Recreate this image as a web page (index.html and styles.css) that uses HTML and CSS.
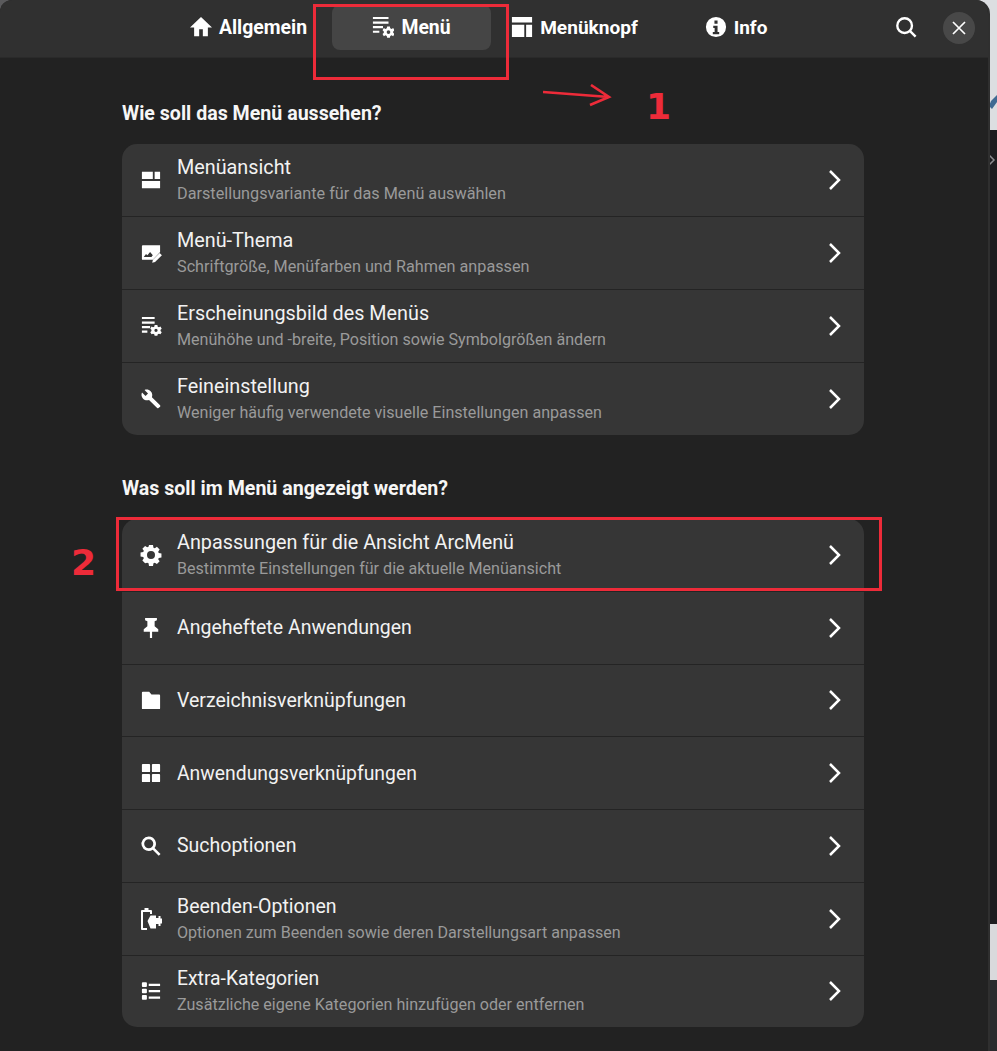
FILE: index.html
```html
<!DOCTYPE html>
<html lang="de">
<head>
<meta charset="utf-8">
<title>ArcMenü Einstellungen</title>
<link rel="stylesheet" href="styles.css">
</head>
<body>
<div class="screen">
  <main class="window">
    <header class="topbar">
      <nav class="tabs">
        <a class="tab tab-allgemein"><svg class="tab-icon" viewBox="0 0 24 24"><path d="M10 22v-7.500h4V22h5.500v-9.500H24L12 1 0 12.500h4.500V22z"/></svg>Allgemein</a>
        <a class="tab tab-menu active"><svg class="tab-icon" viewBox="0 0 24 24"><path d="M1 1h17v2.400H1zM1 6h17v2.400H1zM1 11h11v2.400H1zM1 16h7v2.400H1z"/><path fill-rule="evenodd" d="M16.500 11.500h3l.4 1.900 1.500.7 1.700-.9 1.400 2.400-1.400 1.300v1.400l1.400 1.300-1.400 2.400-1.700-.9-1.500.7-.4 1.900h-3l-.4-1.900-1.500-.7-1.700.9-1.400-2.400 1.400-1.300v-1.400l-1.400-1.300 1.400-2.400 1.700.9 1.500-.7zM18 15.500a2 2 0 1 0 0 4 2 2 0 0 0 0-4z"/></svg>Menü</a>
        <a class="tab tab-knopf"><svg class="tab-icon" viewBox="0 0 24 24"><path d="M1 1h22v6H1zM1 9.500h13.500V23H1zM16.500 9.500H23V23h-6.500z"/></svg>Menüknopf</a>
        <a class="tab tab-info"><svg class="tab-icon" viewBox="0 0 24 24"><path fill-rule="evenodd" d="M12 1a11 11 0 1 0 0 22 11 11 0 0 0 0-22zM10.300 5h3.400v3.400h-3.400zM9 10.500h4.700v7H15.500V20H8.500v-2.500h2v-4.500H9z"/></svg>Info</a>
      </nav>
      <button class="search-btn"><svg viewBox="0 0 24 24"><circle cx="10.500" cy="10.500" r="8"/><path d="M16.200 16.200L22.500 22.500"/></svg></button>
      <button class="close-btn"><svg viewBox="3 3 10 10"><path d="M3 3l10 10M13 3L3 13"/></svg></button>
    </header>
    <div class="content">
      <h2 class="group-title first">Wie soll das Menü aussehen?</h2>
      <section class="card">
        <a class="row"><svg class="row-icon" viewBox="0 0 22 22"><path d="M1 2h12v8H1zM15 2h6v8h-6zM1 12h20v8H1z"/></svg><span class="text"><span class="title">Menüansicht</span><span class="sub wide-sub">Darstellungsvariante für das Menü auswählen</span></span><svg class="chev" viewBox="0 0 14 22"><path d="M2 2l9 9-9 9"/></svg></a>
        <a class="row"><svg class="row-icon" viewBox="0 0 22 22"><path fill-rule="evenodd" d="M2 2.500h19V10l-8 8.500H2a1 1 0 0 1-1-1V3.500a1 1 0 0 1 1-1zM3 15.500h8.500l1.500-2-3-3.500L7 13.500l-1.500-1.300z"/><path d="M20.500 11l2.500 2.500-7.500 7.500-3.200.8.800-3.300z"/></svg><span class="text"><span class="title">Menü-Thema</span><span class="sub wide-sub">Schriftgröße, Menüfarben und Rahmen anpassen</span></span><svg class="chev" viewBox="0 0 14 22"><path d="M2 2l9 9-9 9"/></svg></a>
        <a class="row"><svg class="row-icon" viewBox="0 0 22 22"><path d="M1 1h14v2.400H1zM1 6h14v2.400H1zM1 11h9v2.400H1zM1 16h6v2.400H1z"/><path fill-rule="evenodd" d="M15 10h3l.4 1.700 1.400.7 1.600-.8 1.400 2.400-1.300 1.200v1.400l1.300 1.200-1.400 2.400-1.600-.8-1.400.7-.4 1.700h-3l-.4-1.700-1.400-.7-1.600.8-1.400-2.400 1.300-1.200v-1.400l-1.300-1.200 1.400-2.400 1.600.8 1.400-.7zM16.500 14a1.800 1.800 0 1 0 0 3.600 1.800 1.800 0 0 0 0-3.600z"/></svg><span class="text"><span class="title">Erscheinungsbild des Menüs</span><span class="sub">Menühöhe und -breite, Position sowie Symbolgrößen ändern</span></span><svg class="chev" viewBox="0 0 14 22"><path d="M2 2l9 9-9 9"/></svg></a>
        <a class="row"><svg class="row-icon" viewBox="0 0 22 22"><path d="M21 18L12 9c.8-2.200.4-4.800-1.400-6.600C8.800.6 6 .2 3.900 1.200L7.700 5 5 7.700 1.100 3.900C0 6 .5 8.800 2.300 10.600c1.800 1.800 4.300 2.200 6.500 1.400l9 9c.4.400 1 .4 1.400 0l1.800-1.600c.4-.4.4-1 0-1.400z"/></svg><span class="text"><span class="title">Feineinstellung</span><span class="sub">Weniger häufig verwendete visuelle Einstellungen anpassen</span></span><svg class="chev" viewBox="0 0 14 22"><path d="M2 2l9 9-9 9"/></svg></a>
      </section>
      <h2 class="group-title second">Was soll im Menü angezeigt werden?</h2>
      <section class="card">
        <a class="row"><svg class="row-icon" viewBox="0 0 22 22"><path fill-rule="evenodd" d="M8.800 0h4.400l.5 3 1.500.6L17.500 2l3 3-1.600 2.300.6 1.500 3 .5v4.400l-3 .5-.6 1.500 1.600 2.300-3 3-2.300-1.600-1.500.6-.5 3H8.800l-.5-3-1.500-.6L4.500 20l-3-3 1.600-2.300-.6-1.500-3-.5V8.300l3-.5.6-1.500L1.500 4l3-3 2.300 1.600 1.500-.6zM11 6.600a4.400 4.400 0 1 0 0 8.800 4.400 4.400 0 0 0 0-8.800z"/></svg><span class="text"><span class="title">Anpassungen für die Ansicht ArcMenü</span><span class="sub">Bestimmte Einstellungen für die aktuelle Menüansicht</span></span><svg class="chev" viewBox="0 0 14 22"><path d="M2 2l9 9-9 9"/></svg></a>
        <a class="row"><svg class="row-icon" viewBox="0 0 22 22"><path d="M4.500 0h13v2.500l-2.500 1V9l4 3.500V15H12.200v7H9.800v-7H3v-2.500L7 9V3.500l-2.500-1z"/></svg><span class="text"><span class="title snug">Angeheftete Anwendungen</span></span><svg class="chev" viewBox="0 0 14 22"><path d="M2 2l9 9-9 9"/></svg></a>
        <a class="row"><svg class="row-icon" viewBox="0 0 22 22"><path d="M2 2h7l2.500 3H20a1 1 0 0 1 1 1v14a1 1 0 0 1-1 1H2a1 1 0 0 1-1-1V3a1 1 0 0 1 1-1z"/></svg><span class="text"><span class="title snug">Verzeichnisverknüpfungen</span></span><svg class="chev" viewBox="0 0 14 22"><path d="M2 2l9 9-9 9"/></svg></a>
        <a class="row"><svg class="row-icon" viewBox="0 0 22 22"><path d="M2 1h7a1 1 0 0 1 1 1v7a1 1 0 0 1-1 1H2a1 1 0 0 1-1-1V2a1 1 0 0 1 1-1zM13 1h7a1 1 0 0 1 1 1v7a1 1 0 0 1-1 1h-7a1 1 0 0 1-1-1V2a1 1 0 0 1 1-1zM2 12h7a1 1 0 0 1 1 1v7a1 1 0 0 1-1 1H2a1 1 0 0 1-1-1v-7a1 1 0 0 1 1-1zM13 12h7a1 1 0 0 1 1 1v7a1 1 0 0 1-1 1h-7a1 1 0 0 1-1-1v-7a1 1 0 0 1 1-1z"/></svg><span class="text"><span class="title tight">Anwendungsverknüpfungen</span></span><svg class="chev" viewBox="0 0 14 22"><path d="M2 2l9 9-9 9"/></svg></a>
        <a class="row"><svg class="row-icon" viewBox="0 0 22 22"><path fill-rule="evenodd" d="M8.500.5a8 8 0 0 1 6.400 12.700l6.600 6.600-2 2-6.600-6.600A8 8 0 1 1 8.500.5zm0 3a5 5 0 1 0 0 10 5 5 0 0 0 0-10z"/></svg><span class="text"><span class="title snug">Suchoptionen</span></span><svg class="chev" viewBox="0 0 14 22"><path d="M2 2l9 9-9 9"/></svg></a>
        <a class="row"><svg class="row-icon wide" viewBox="0 0 22 22"><path fill-rule="evenodd" d="M4.500 0h4v2h2.500a1 1 0 0 1 1 1v3h-2V4H3v16h4v2H2a1 1 0 0 1-1-1V3a1 1 0 0 1 1-1h2.500z"/><path d="M7.500 13l3-5.500h5.500V10h2.500V8h2v2.500H22v5h-1.500V18h-2v-2H16v4.500h-5.500z"/></svg><span class="text"><span class="title snug">Beenden-Optionen</span><span class="sub">Optionen zum Beenden sowie deren Darstellungsart anpassen</span></span><svg class="chev" viewBox="0 0 14 22"><path d="M2 2l9 9-9 9"/></svg></a>
        <a class="row"><svg class="row-icon" viewBox="0 0 22 22"><path d="M2 1.500h3.500a1 1 0 0 1 1 1v3a1 1 0 0 1-1 1H2a1 1 0 0 1-1-1v-3a1 1 0 0 1 1-1zM2 8.500h3.500a1 1 0 0 1 1 1v3a1 1 0 0 1-1 1H2a1 1 0 0 1-1-1v-3a1 1 0 0 1 1-1zM2 15.500h3.500a1 1 0 0 1 1 1v3a1 1 0 0 1-1 1H2a1 1 0 0 1-1-1v-3a1 1 0 0 1 1-1zM8.500 3H21v2.400H8.500zM8.500 10H21v2.400H8.500zM8.500 17H21v2.400H8.500z"/></svg><span class="text"><span class="title tight">Extra-Kategorien</span><span class="sub">Zusätzliche eigene Kategorien hinzufügen oder entfernen</span></span><svg class="chev" viewBox="0 0 14 22"><path d="M2 2l9 9-9 9"/></svg></a>
      </section>
    </div>
  </main>
  <aside class="backdrop">
    <div class="strip-light"><svg class="strip-glyph" viewBox="0 0 8 16"><path d="M8 0v7L3 14 0 11l2-5z"/></svg></div>
    <div class="strip-dark"><svg class="strip-x" viewBox="0 0 8 12"><path d="M0 1l5 5-5 5"/></svg></div>
    <div class="strip-light lower"></div>
    <div class="strip-dark last"></div>
  </aside>
  <div class="mark box-tab"></div>
  <div class="mark box-row"></div>
  <span class="num num-one">1</span>
  <span class="num num-two">2</span>
  <svg class="arrow" viewBox="0 0 70 24"><path d="M0 8l66 5M48 1l18 12-19 8"/></svg>
</div>
</body>
</html>
```
FILE: styles.css
```css
* { box-sizing: border-box; }
html, body { margin: 0; padding: 0; }
body { width: 997px; height: 1051px; overflow: hidden; background: #5a5a5c; font-family: Roboto, "Liberation Sans", sans-serif; color: #fff; }
.screen { position: relative; display: flex; width: 997px; height: 1051px; }
.window { position: relative; z-index: 1; width: 990px; height: 1051px; background: #222222; border-right: 2px solid #2f2f2f; border-radius: 12px 14px 0 0; overflow: hidden; flex: none; }
.backdrop { flex: none; width: 27px; margin-left: -20px; display: flex; flex-direction: column; overflow: hidden; }
.strip-light { height: 130px; background: #dcdee1; flex: none; display: flex; justify-content: flex-end; align-items: flex-end; padding-bottom: 19px; }
.strip-glyph { width: 8px; height: 16px; fill: #3f6a92; }
.strip-dark { height: 794px; background: #1d1d20; flex: none; display: flex; justify-content: flex-end; align-items: flex-start; padding: 24px 0 0; }
.strip-x { width: 8px; height: 12px; fill: none; stroke: #8c8c90; stroke-width: 1.500; }
.strip-light.lower { height: 56px; background: #d9d9dc; }
.strip-dark.last { flex: 1; height: auto; background: #2b2b2e; }

.topbar { position: relative; height: 58px; background: #303030; display: flex; align-items: center; border-bottom: 1px solid #2a2a2a; }
.tabs { display: flex; height: 58px; align-items: flex-start; padding: 5px 0 0 172px; }
.tab { display: flex; align-items: center; justify-content: center; height: 45px; font-size: 19.400px; font-weight: 700; color: #fff; border-radius: 8px; white-space: nowrap; flex: none; }
.tab-icon { width: 22px; height: 22px; fill: #fff; margin-right: 7px; flex: none; }
.tab-allgemein { width: 153px; }
.tab-menu { width: 159px; margin-left: 7px; background: #454545; }
.tab-knopf { width: 153px; margin-left: 7px; font-size: 19.100px; }
.tab-info { width: 154px; margin-left: 8px; font-size: 19px; }
.search-btn { position: absolute; left: 888px; top: 9px; width: 36px; height: 36px; background: none; border: 0; padding: 7px; }
.search-btn svg { display: block; width: 22px; height: 22px; fill: none; stroke: #fff; stroke-width: 2.600; }
.close-btn { position: absolute; left: 943px; top: 12px; width: 32px; height: 32px; border-radius: 50%; background: #484848; border: 0; padding: 10px; }
.close-btn svg { display: block; width: 12px; height: 12px; fill: none; stroke: #fff; stroke-width: 1.400; overflow: visible; }

.content { padding: 0 124px 0 122px; }
.group-title { margin: 0; font-size: 19.600px; line-height: 24px; font-weight: 700; color: #f6f6f6; }
.group-title.first { padding-top: 44px; height: 86px; }
.group-title.second { padding-top: 42px; height: 84px; }
.card { background: #363636; border-radius: 15px; overflow: hidden; }
.row { display: flex; align-items: center; height: 72.75px; padding: 0 22px 0 19px; border-top: 1px solid #242424; }
.row:first-child { border-top: 0; height: 72.250px; }
.row-icon { width: 20px; height: 20px; fill: #fff; flex: none; overflow: visible; }
.row-icon.wide { width: 22px; height: 22px; margin-left: -1px; margin-right: -1px; }
.text { flex: 1; display: flex; flex-direction: column; padding: 1px 0 0 16px; min-width: 0; }
.title { font-size: 19.800px; line-height: 26px; color: #f2f2f2; white-space: nowrap; }
.title.snug { font-size: 19.500px; }
.title.tight { font-size: 19.350px; }
.sub { font-size: 16.100px; line-height: 23px; margin: 1px 0; color: #9a9a9a; white-space: nowrap; }
.sub.wide-sub { font-size: 16.230px; }
.chev { width: 14px; height: 22px; fill: none; stroke: #fff; stroke-width: 2.500; flex: none; }

.mark { position: absolute; z-index: 2; border: 3px solid #ed2b39; }
.box-tab { left: 313px; top: 4px; width: 196px; height: 76px; }
.box-row { left: 116px; top: 517px; width: 766px; height: 74px; }
.num { position: absolute; z-index: 2; font-family: "DejaVu Sans", sans-serif; font-weight: 700; font-size: 36px; line-height: 44px; color: #ed2b39; }
.num-one { left: 646px; top: 85px; }
.num-two { left: 71px; top: 541px; }
.arrow { position: absolute; z-index: 2; left: 543px; top: 84px; width: 70px; height: 24px; fill: none; stroke: #ed2b39; stroke-width: 2.600; }
```
